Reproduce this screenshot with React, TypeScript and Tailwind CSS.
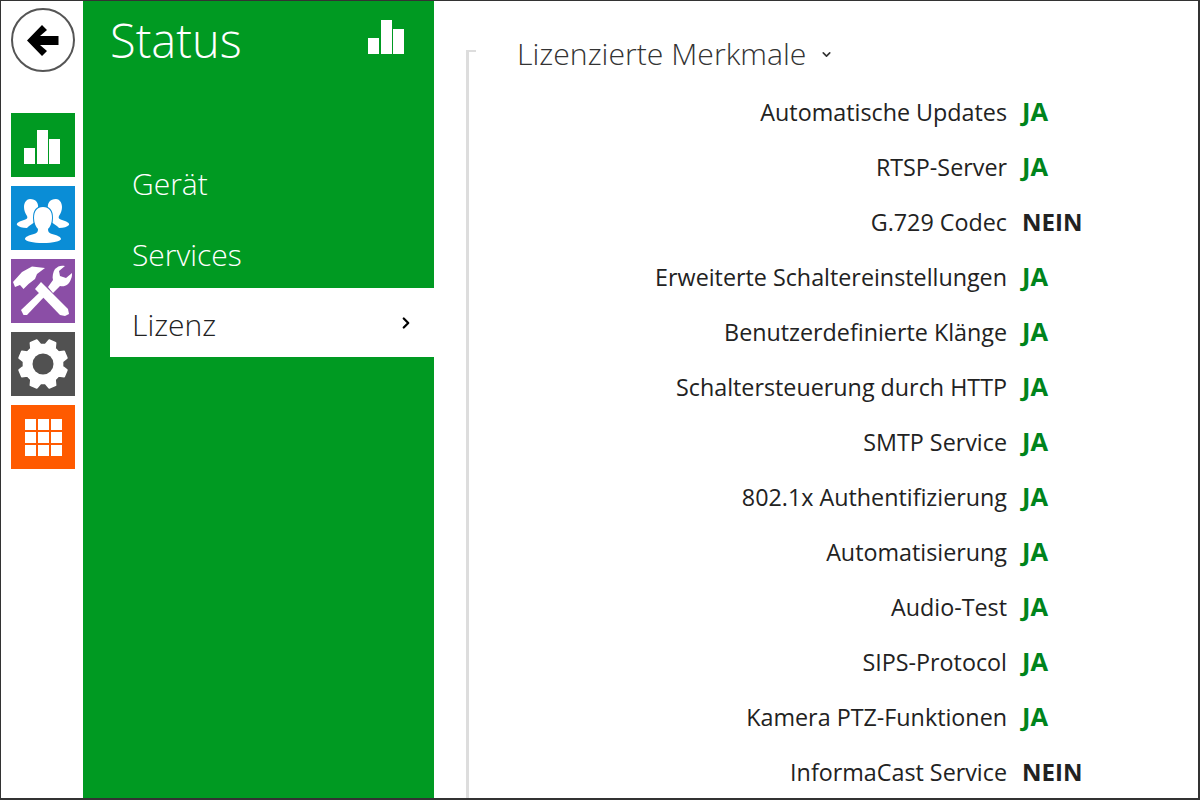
import { ChevronDown, ChevronRight } from "lucide-react";

const features: [string, boolean][] = [
  ["Automatische Updates", true],
  ["RTSP-Server", true],
  ["G.729 Codec", false],
  ["Erweiterte Schaltereinstellungen", true],
  ["Benutzerdefinierte Klänge", true],
  ["Schaltersteuerung durch HTTP", true],
  ["SMTP Service", true],
  ["802.1x Authentifizierung", true],
  ["Automatisierung", true],
  ["Audio-Test", true],
  ["SIPS-Protocol", true],
  ["Kamera PTZ-Funktionen", true],
  ["InformaCast Service", false],
];

// gear outline, 8 teeth around the tile centre
const gearPoints = Array.from({ length: 8 })
  .flatMap((_, k) => {
    const a = 22.5 + 45 * k;
    return [
      [19.5, a - 15],
      [24.5, a - 8],
      [24.5, a + 8],
      [19.5, a + 15],
    ];
  })
  .map(([r, d]) => {
    const t = (d * Math.PI) / 180;
    return `${(32 + r * Math.cos(t)).toFixed(2)},${(32 + r * Math.sin(t)).toFixed(2)}`;
  })
  .join(" ");

const Bars = () => (
  <svg viewBox="0 0 36 34" className="w-[36px] h-[34px]" fill="#fff">
    <rect x="0" y="18" width="11" height="16" />
    <rect x="13" y="0" width="11" height="34" />
    <rect x="25" y="9" width="11" height="25" />
  </svg>
);

const personCenter =
  "M32 21c6 0 9 4 9 11 0 5-2 9-4 11 0 3 1 4 4 5 5 1 9 3 9 5 0 2-8 4-18 4s-18-2-18-4c0-2 4-4 9-5 3-1 4-2 4-5-2-2-4-6-4-11 0-7 3-11 9-11z";

const People = () => (
  <svg viewBox="0 0 64 64" className="w-16 h-16" fill="#fff">
    <path d="M19 13c6 0 9 4 8 10-1 3-2 5-3 7l1 5-4 3c-2 1-4 3-5 4-5 0-8-1-10-3-1-2 3-4 7-5 3-1 4-2 3-4-2-3-3-6-3-9 0-5 3-8 6-8z" />
    <path d="M45 13c-6 0-9 4-8 10 1 3 2 5 3 7l-1 5 4 3c2 1 4 3 5 4 5 0 8-1 10-3 1-2-3-4-7-5-3-1-4-2-3-4 2-3 3-6 3-9 0-5-3-8-6-8z" />
    <path d={personCenter} stroke="#0a8dd6" strokeWidth="2" paintOrder="stroke" />
  </svg>
);

const Tools = () => (
  <svg viewBox="0 0 64 64" className="w-16 h-16" fill="#fff">
    <polygon points="2,23 4,28 9,26 12.500,30 17.500,25 24,20 26,15 34,9 21,7.500 11,13" />
    <polygon points="24,30 30,23 57,50 58,55 54,57 49,56" />
    <polygon points="10,51 29,33 34,37 16,56 12.500,56" />
    <path d="M37 28l5 6 7-7c5 1 9-1 11-7 1-2 1-4 1-6l-6 5-6-2-1-5 6-5c-4-1-7 0-10 3-2 3-3 8-2 11z" />
  </svg>
);

const Gear = () => (
  <svg viewBox="0 0 64 64" className="w-16 h-16">
    <polygon points={gearPoints} fill="#fff" stroke="#fff" strokeWidth="2" strokeLinejoin="round" />
    <circle cx="32" cy="32" r="10.500" fill="#515151" />
  </svg>
);

const Grid = () => (
  <div className="grid grid-cols-3 gap-[2px] w-[37px]">
    {Array.from({ length: 9 }).map((_, i) => (
      <div key={i} className="h-[11px] bg-white" />
    ))}
  </div>
);

const Tile = ({ color, children }: { color: string; children: React.ReactNode }) => (
  <div className={`w-16 h-16 flex items-center justify-center overflow-hidden ${color}`}>{children}</div>
);

export default function App() {
  return (
    <div
      className="w-[1200px] h-[800px] overflow-hidden bg-white flex border-t border-l border-r-2 border-b-2 border-[#333]"
      style={{ fontFamily: '"Open Sans", "Noto Sans", sans-serif' }}
    >
      {/* Hauptmenü */}
      <div className="w-[82px] shrink-0 pl-[10px] pt-[7px]">
        <div className="w-16 h-16 rounded-full border-2 border-[#555] flex items-center justify-center">
          <svg viewBox="0 0 32 31" className="w-[32px] h-[31px]" fill="#000">
            <polygon points="0,15.500 15,0 20,5 13,11 31.500,11 31.500,20 13,20 20,26 15,31" />
          </svg>
        </div>
        <div className="mt-[41px] flex flex-col gap-[9px]">
          <Tile color="bg-[#009a22]">
            <div className="pt-[4px] pr-[2px]">
              <Bars />
            </div>
          </Tile>
          <Tile color="bg-[#0a8dd6]">
            <People />
          </Tile>
          <Tile color="bg-[#8b4ea6]">
            <Tools />
          </Tile>
          <Tile color="bg-[#515151]">
            <Gear />
          </Tile>
          <Tile color="bg-[#ff5a00]">
            <Grid />
          </Tile>
        </div>
      </div>

      {/* Untermenü */}
      <div className="w-[351px] shrink-0 bg-[#009a22] pl-[27px] text-white">
        <div className="h-[147px] flex items-start justify-between pr-[30px]">
          <span className="text-[47px] leading-[78px] font-light">Status</span>
          <div className="mt-[19px]">
            <Bars />
          </div>
        </div>
        <div className="h-[70px] pl-[22px] flex items-center text-[30px] font-light">Gerät</div>
        <div className="h-[70px] pl-[22px] pt-[2px] flex items-center text-[30px] font-light">Services</div>
        <div className="h-[69px] pl-[22px] pr-[19px] flex items-center justify-between bg-white text-[#222] text-[30px] font-light">
          <span className="pt-[4px]">Lizenz</span>
          <ChevronRight className="w-[18px] h-[18px] text-black" strokeWidth={3} />
        </div>
      </div>

      {/* Inhalt */}
      <div className="flex-1 pl-[32px] pt-[49px]">
        <div className="relative border-l-[3px] border-[#ddd] h-[800px] pl-[48px]">
          <div className="absolute left-0 top-0 w-[7px] h-[2px] bg-[#ddd]" />
          <div className="flex items-center gap-[14px] text-[30.200px] leading-[8px] font-light text-[#333] h-[8px]">
            Lizenzierte Merkmale
            <ChevronDown className="w-[13px] h-[13px]" strokeWidth={3} />
          </div>
          <div className="mt-[27px]">
            {features.map(([name, on]) => (
              <div key={name} className="h-[55px] flex items-center text-[23.300px] text-[#222]">
                <div className="w-[490px] text-right">{name}</div>
                <div className={`ml-[15px] -mt-[2px] font-bold ${on ? "text-[25.500px] text-[#00841c]" : "text-[24px] text-[#222]"}`}>
                  {on ? "JA" : "NEIN"}
                </div>
              </div>
            ))}
          </div>
        </div>
      </div>
    </div>
  );
}
